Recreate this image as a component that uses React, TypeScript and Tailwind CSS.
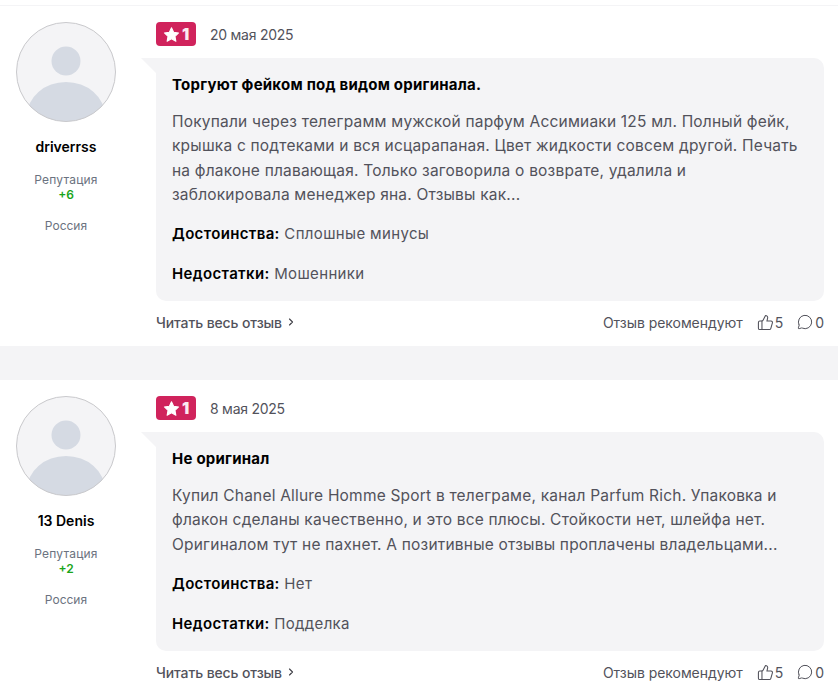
import { ThumbsUp, MessageCircle, ChevronRight } from "lucide-react";

interface Review {
  author: string;
  rep: string;
  date: string;
  title: string;
  body: string[];
  pros: string;
  cons: string;
}

const reviews: Review[] = [
  {
    author: "driverrss",
    rep: "+6",
    date: "20 мая 2025",
    title: "Торгуют фейком под видом оригинала.",
    body: [
      "Покупали через телеграмм мужской парфум Ассимиаки 125 мл. Полный фейк,",
      "крышка с подтеками и вся исцарапаная. Цвет жидкости совсем другой. Печать",
      "на флаконе плавающая. Только заговорила о возврате, удалила и",
      "заблокировала менеджер яна. Отзывы как...",
    ],
    pros: "Сплошные минусы",
    cons: "Мошенники",
  },
  {
    author: "13 Denis",
    rep: "+2",
    date: "8 мая 2025",
    title: "Не оригинал",
    body: [
      "Купил Chanel Allure Homme Sport в телеграме, канал Parfum Rich. Упаковка и",
      "флакон сделаны качественно, и это все плюсы. Стойкости нет, шлейфа нет.",
      "Оригиналом тут не пахнет. А позитивные отзывы проплачены владельцами...",
    ],
    pros: "Нет",
    cons: "Подделка",
  },
];

function Avatar() {
  return (
    <svg width="100" height="100" viewBox="0 0 100 100" className="block">
      <defs>
        <clipPath id="avatar-clip">
          <circle cx="50" cy="50" r="49.5" />
        </clipPath>
      </defs>
      <circle cx="50" cy="50" r="49.5" fill="#f4f4f6" />
      <g clipPath="url(#avatar-clip)">
        <circle cx="50" cy="39" r="14.5" fill="#d5dae3" />
        <ellipse cx="50" cy="94" rx="39" ry="34" fill="#d5dae3" />
      </g>
      <circle cx="50" cy="50" r="49.5" fill="none" stroke="#c9c9cc" strokeWidth="1" />
    </svg>
  );
}

function RatingBadge() {
  return (
    <div className="flex h-6 w-10 items-center justify-center gap-[2px] rounded-[4px] bg-[#d0235c]">
      <svg width="17" height="17" viewBox="0 0 24 24" fill="#fff" stroke="#fff" strokeWidth="1.5" strokeLinejoin="round">
        <path d="M12 2.5l3 6.4 7 .9-5.1 4.8 1.3 7-6.2-3.5-6.2 3.5 1.3-7L2 9.8l7-.9z" />
      </svg>
      <span className="text-[16px] leading-none font-black text-[#fbe9f0]">1</span>
    </div>
  );
}

function ReviewRow({ r }: { r: Review }) {
  return (
    <div className="flex bg-white pl-4 pr-[14px]">
      <div className="flex w-[100px] shrink-0 flex-col items-center pt-4">
        <Avatar />
        <div className="mt-[15px] text-[14px] leading-5 font-semibold text-black">{r.author}</div>
        <div className="mt-[15px] text-[12px] leading-[15px] tracking-[0.2px] text-[#6b7280]">Репутация</div>
        <div className="text-[12px] leading-[15px] font-semibold text-[#1aa51a]">{r.rep}</div>
        <div className="mt-[16px] text-[12px] leading-[15px] text-[#6b7280]">Россия</div>
      </div>
      <div className="ml-10 flex-1 pt-4">
        <div className="flex items-center">
          <RatingBadge />
          <span className="ml-[14px] text-[14px] tracking-[-0.25px] text-[#52525b]">{r.date}</span>
        </div>
        <div className="relative mt-3 rounded-r-[10px] rounded-bl-[10px] bg-[#f4f4f6] px-4 pt-4 pb-[15px]">
          <div className="absolute top-0 -left-[15px] h-0 w-0 border-t-[15px] border-l-[15px] border-t-[#f4f4f6] border-l-transparent" />
          <div className="text-[15px] leading-[22px] tracking-[0.23px] font-bold text-black">{r.title}</div>
          <div className="mt-[14px] text-[15.5px] leading-[24.3px] tracking-[0.2px] text-[#52525b]">
            {r.body.map((line) => (
              <div key={line} className="whitespace-nowrap">
                {line}
              </div>
            ))}
          </div>
          <div className="mt-[15px] text-[15px] leading-6 tracking-[0.35px] text-[#52525b]">
            <span className="font-semibold text-black">Достоинства:</span> {r.pros}
          </div>
          <div className="mt-4 text-[15px] leading-6 tracking-[0.35px] text-[#52525b]">
            <span className="font-semibold text-black">Недостатки:</span> {r.cons}
          </div>
        </div>
        <div className="flex h-[45px] items-center justify-between pb-[3px]">
          <div className="flex items-center gap-[3px] text-[14px] tracking-[-0.12px] font-medium text-[#52525b]">
            Читать весь отзыв
            <ChevronRight size={12} strokeWidth={2.25} className="text-[#3f3f46]" />
          </div>
          <div className="flex items-center text-[14px] tracking-[-0.05px] text-[#52525b]">
            <span>Отзыв рекомендуют</span>
            <ThumbsUp size={17} strokeWidth={1.5} className="ml-[14px]" />
            <span className="ml-px">5</span>
            <MessageCircle size={16} strokeWidth={1.5} className="ml-[14px]" />
            <span className="ml-[2px]">0</span>
          </div>
        </div>
      </div>
    </div>
  );
}

export default function App() {
  return (
    <div className="h-[694px] w-[838px] overflow-hidden bg-white font-['Inter',sans-serif]">
      <div className="h-[5px]" />
      <div className="h-px bg-[#f4f4f6]" />
      <ReviewRow r={reviews[0]} />
      <div className="h-[34px] bg-[#f4f4f6]" />
      <ReviewRow r={reviews[1]} />
    </div>
  );
}
